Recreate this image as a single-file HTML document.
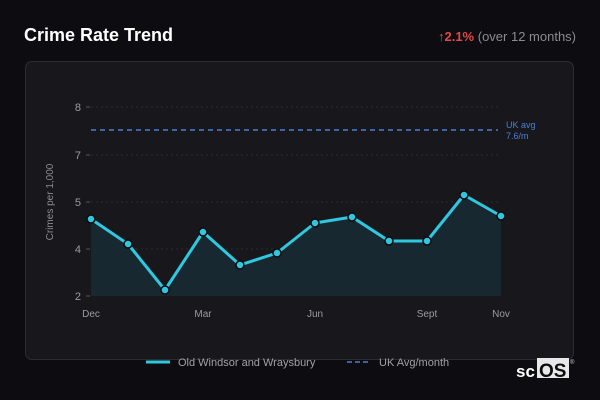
<!DOCTYPE html>
<html><head><style>
body{margin:0;width:600px;height:400px;background:#0d0d11;font-family:"Liberation Sans",sans-serif;position:relative;overflow:hidden}
.t{position:absolute;left:24px;top:25px;color:#fff;font-weight:bold;font-size:18px}
.c{position:absolute;right:24px;top:29px;font-size:13px;color:#8a8a90}
.c b{color:#e04848}
.card{position:absolute;left:25px;top:61px;width:549px;height:299px;background:#18181c;border:1px solid #2c2c32;border-radius:7px;box-sizing:border-box}
svg{position:absolute;left:0;top:0}
</style></head><body>
<div class="t">Crime Rate Trend</div>
<div class="c"><b>↑2.1%</b> (over 12 months)</div>
<div class="card"></div>
<svg width="600" height="400" font-family="Liberation Sans, sans-serif">
<g stroke="#2a2a30" stroke-dasharray="2,3" stroke-width="1">
<line x1="91" y1="107" x2="500" y2="107"/><line x1="91" y1="155" x2="500" y2="155"/>
<line x1="91" y1="202" x2="500" y2="202"/><line x1="91" y1="249" x2="500" y2="249"/>
</g>
<g stroke="#555" stroke-width="1"><line x1="86" y1="107" x2="90" y2="107"/><line x1="86" y1="155" x2="90" y2="155"/><line x1="86" y1="202" x2="90" y2="202"/><line x1="86" y1="249" x2="90" y2="249"/><line x1="86" y1="296" x2="90" y2="296"/></g>
<g fill="#9a9aa0" font-size="11" text-anchor="end"><text x="81" y="111">8</text><text x="81" y="159">7</text><text x="81" y="206">5</text><text x="81" y="253">4</text><text x="81" y="300">2</text></g>
<text transform="translate(53,202) rotate(-90)" fill="#8a8a90" font-size="10" text-anchor="middle">Crimes per 1,000</text>
<line x1="91" y1="130" x2="498" y2="130" stroke="#4a7fd6" stroke-width="1.5" stroke-dasharray="5,4"/>
<text x="506" y="128" fill="#4a7fd6" font-size="9">UK avg</text><text x="506" y="139" fill="#4a7fd6" font-size="9">7.6/m</text>
<polygon fill="#182830" points="91,296 91,219 128,244 165,290 203,232 240,265 277,253 315,223 352,217 389,241 427,241 464,195 501,216 501,296"/>
<polyline fill="none" stroke="#2fc8e0" stroke-width="3" stroke-linejoin="round" points="91,219 128,244 165,290 203,232 240,265 277,253 315,223 352,217 389,241 427,241 464,195 501,216"/>
<g fill="#2fc8e0" stroke="#0d0d11" stroke-width="1.5">
<circle cx="91" cy="219" r="4"/><circle cx="128" cy="244" r="4"/><circle cx="165" cy="290" r="4"/><circle cx="203" cy="232" r="4"/><circle cx="240" cy="265" r="4"/><circle cx="277" cy="253" r="4"/><circle cx="315" cy="223" r="4"/><circle cx="352" cy="217" r="4"/><circle cx="389" cy="241" r="4"/><circle cx="427" cy="241" r="4"/><circle cx="464" cy="195" r="4"/><circle cx="501" cy="216" r="4"/>
</g>
<g fill="#9a9aa0" font-size="10" text-anchor="middle"><text x="91" y="317">Dec</text><text x="203" y="317">Mar</text><text x="315" y="317">Jun</text><text x="427" y="317">Sept</text><text x="501" y="317">Nov</text></g>
<line x1="146" y1="362" x2="170" y2="362" stroke="#2fc8e0" stroke-width="3"/>
<text x="178" y="366" fill="#a0a0a6" font-size="11">Old Windsor and Wraysbury</text>
<line x1="347" y1="362" x2="371" y2="362" stroke="#4a7fd6" stroke-width="1.5" stroke-dasharray="5,3"/>
<text x="379" y="366" fill="#a0a0a6" font-size="11">UK Avg/month</text>
<text x="516" y="377" fill="#fff" font-size="17" font-weight="bold">sc</text>
<rect x="537" y="358" width="32" height="20" fill="#e8e8e8"/>
<text x="539" y="377" fill="#0d0d11" font-size="19" font-weight="bold">OS</text>
<text x="570" y="364" fill="#ccc" font-size="6">®</text>
</svg>
</body></html>
